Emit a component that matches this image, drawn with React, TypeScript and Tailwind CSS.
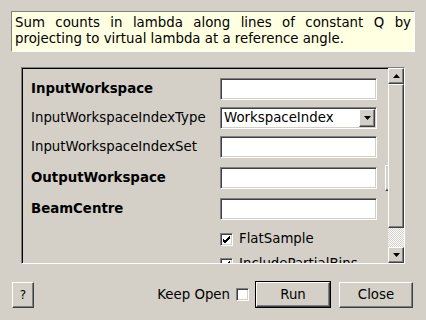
import React from "react";

const raised =
  "border border-t-white border-l-white border-r-[#404040] border-b-[#404040] shadow-[inset_-1px_-1px_0_#808080] bg-[#d4d0c8]";
const sunken =
  "border border-t-[#808080] border-l-[#808080] border-r-white border-b-white shadow-[inset_1px_1px_0_#404040,inset_-1px_-1px_0_#d4d0c8] bg-white";

function Check({ checked }: { checked: boolean }) {
  return (
    <div className={`${sunken} w-[13px] h-[13px] flex items-center justify-center`}>
      {checked && (
        <svg width="9" height="9" viewBox="0 0 9 9">
          <path d="M1 4 L3 6 L8 1 M1 5 L3 7 L8 2 M1 6 L3 8 L8 3" stroke="#000" strokeWidth="1" fill="none" />
        </svg>
      )}
    </div>
  );
}

function Row({
  label,
  bold,
  children,
  tall,
}: {
  label: string;
  bold?: boolean;
  children: React.ReactNode;
  tall?: boolean;
}) {
  return (
    <div className={`flex items-center shrink-0 ${tall ? "h-[26px]" : "h-[22px]"}`}>
      <div className={`w-[198px] shrink-0 pl-[9px] ${bold ? "font-bold" : ""}`}>{label}</div>
      {children}
    </div>
  );
}

export default function App() {
  return (
    <div
      className="w-[426px] h-[320px] bg-[#d4d0c8] flex flex-col text-[13.33px] text-black overflow-hidden"
      style={{ fontFamily: "'DejaVu Sans', sans-serif" }}
    >
      <div className="ml-[11px] mt-[11px] w-[404px] h-[41px] bg-[#ffffe1] border border-t-[#808080] border-l-[#808080] border-r-white border-b-white px-[3px] pt-[3px] leading-[16px] text-justify">
        Sum counts in lambda along lines of constant Q by projecting to virtual lambda at a reference angle.
      </div>

      <div className="ml-[21px] mt-[15px] w-[384px] h-[197px] border border-t-[#808080] border-l-[#808080] border-r-white border-b-white shadow-[inset_1px_1px_0_#000] flex">
        <div className="flex-1 overflow-hidden flex flex-col pt-[10px] gap-[7px]">
          <Row label="InputWorkspace" bold>
            <div className={`${sunken} w-[157px] h-[22px] shrink-0`} />
          </Row>
          <Row label="InputWorkspaceIndexType">
            <div className={`${sunken} w-[157px] h-[22px] shrink-0 flex items-center pl-[3px] pr-[1px]`}>
              <span className="flex-1">WorkspaceIndex</span>
              <div className={`${raised} w-[16px] h-[18px] flex items-center justify-center`}>
                <svg width="7" height="4" viewBox="0 0 7 4">
                  <path d="M0 0 H7 L3.5 4 Z" fill="#000" />
                </svg>
              </div>
            </div>
          </Row>
          <Row label="InputWorkspaceIndexSet">
            <div className={`${sunken} w-[157px] h-[22px] shrink-0`} />
          </Row>
          <Row label="OutputWorkspace" bold tall>
            <div className={`${sunken} w-[157px] h-[22px] shrink-0`} />
            <div className={`${raised} ml-[8px] w-[30px] h-[26px] shrink-0`} />
          </Row>
          <Row label="BeamCentre" bold>
            <div className={`${sunken} w-[157px] h-[22px] shrink-0`} />
          </Row>
          <div className="flex items-center h-[16px] mt-[4px] shrink-0 pl-[198px] gap-[6px]">
            <Check checked />
            <span>FlatSample</span>
          </div>
          <div className="flex items-center h-[16px] mt-[2px] shrink-0 pl-[198px] gap-[6px]">
            <Check checked />
            <span>IncludePartialBins</span>
          </div>
        </div>

        <div className="w-[16px] shrink-0 flex flex-col">
          <div className={`${raised} h-[16px] flex items-center justify-center`}>
            <svg width="7" height="4" viewBox="0 0 7 4">
              <path d="M3.5 0 L7 4 H0 Z" fill="#000" />
            </svg>
          </div>
          <div className={`${raised} h-[144px]`} />
          <div className="h-[19px] bg-[repeating-conic-gradient(#ffffff_0_25%,#d4d0c8_0_50%)] bg-[length:2px_2px]" />
          <div className={`${raised} h-[16px] flex items-center justify-center`}>
            <svg width="7" height="4" viewBox="0 0 7 4">
              <path d="M0 0 H7 L3.5 4 Z" fill="#000" />
            </svg>
          </div>
        </div>
      </div>

      <div className="mt-[17px] h-[27px] flex items-center pl-[12px] pr-[13px]">
        <button className={`${raised} w-[22px] h-[26px] flex items-center justify-center text-[12px]`}>?</button>
        <div className="flex-1" />
        <span>Keep Open</span>
        <div className="ml-[6px]">
          <Check checked={false} />
        </div>
        <button className="ml-[6px] w-[76px] h-[27px] border border-black">
          <div className={`${raised} w-full h-full flex items-center justify-center`}>Run</div>
        </button>
        <button className={`${raised} ml-[8px] w-[74px] h-[26px] flex items-center justify-center`}>Close</button>
      </div>
    </div>
  );
}
